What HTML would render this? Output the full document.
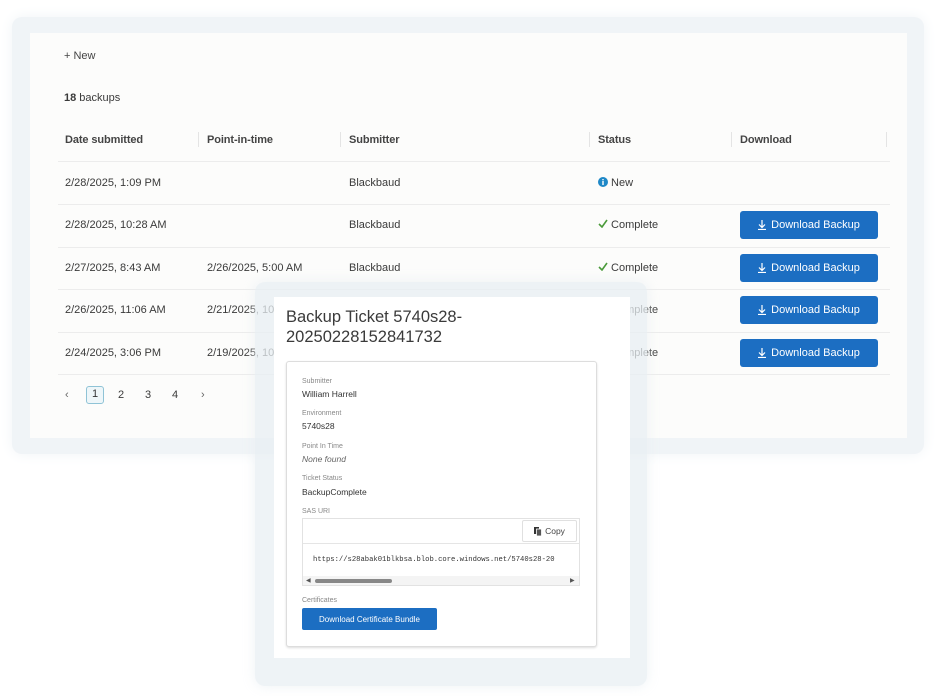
<!DOCTYPE html>
<html><head><meta charset="utf-8"><style>
*{margin:0;padding:0;box-sizing:border-box}
body{width:936px;height:696px;background:#fff;font-family:"Liberation Sans",sans-serif;color:#333;position:relative;overflow:hidden}
.a{position:absolute;white-space:nowrap}
.t{font-size:11px;color:#3a3a3a}
.h{font-size:11px;color:#444;font-weight:bold;letter-spacing:-0.1px}
.line{position:absolute;left:58px;width:832px;height:1px;background:#ececec}
.btn{position:absolute;left:740px;width:138px;height:28px;background:#1c6ec2;border-radius:3px;color:#fff;font-size:11px;display:flex;align-items:center;justify-content:center;gap:5px}
.sep{position:absolute;top:132px;width:1px;height:15px;background:#e4e4e4}
.lbl{position:absolute;left:302px;font-size:7px;color:#888}
.val{position:absolute;left:302px;font-size:8.5px;color:#333}
</style></head><body>
<div class="a" style="left:12px;top:17px;width:912px;height:437px;background:#f0f4f7;border-radius:10px;box-shadow:0 0 14px #f0f4f7"></div>
<div class="a" style="left:30px;top:33px;width:877px;height:405px;background:#fcfcfb"></div>

<div class="a t" style="left:64px;top:50px;color:#444">+ New</div>
<div class="a t" style="left:64px;top:92px"><b>18</b> backups</div>

<div class="a h" style="left:65px;top:134px">Date submitted</div>
<div class="a h" style="left:207px;top:134px">Point-in-time</div>
<div class="a h" style="left:349px;top:134px">Submitter</div>
<div class="a h" style="left:598px;top:134px">Status</div>
<div class="a h" style="left:740px;top:134px">Download</div>
<div class="sep" style="left:198px"></div><div class="sep" style="left:340px"></div><div class="sep" style="left:589px"></div><div class="sep" style="left:731px"></div><div class="sep" style="left:886px"></div>
<div class="line" style="top:161px"></div>
<div class="line" style="top:204px"></div>
<div class="line" style="top:247px"></div>
<div class="line" style="top:289px"></div>
<div class="line" style="top:332px"></div>
<div class="line" style="top:374px"></div>

<div class="a t" style="left:65px;top:177px">2/28/2025, 1:09 PM</div>
<div class="a t" style="left:349px;top:177px">Blackbaud</div>
<div class="a t" style="left:598px;top:177px"><svg width="10" height="10" style="vertical-align:-1px"><circle cx="5" cy="5" r="5" fill="#1e88c7"/><rect x="4.3" y="4" width="1.4" height="4" fill="#fff"/><rect x="4.3" y="2" width="1.4" height="1.3" fill="#fff"/></svg> New</div>

<div class="a t" style="left:65px;top:219px">2/28/2025, 10:28 AM</div>
<div class="a t" style="left:349px;top:219px">Blackbaud</div>
<div class="a t" style="left:598px;top:219px"><svg width="10" height="9" style="vertical-align:0"><path d="M1 5 L4 8 L9 1" stroke="#4a9a3a" stroke-width="1.6" fill="none"/></svg> Complete</div>

<div class="a t" style="left:65px;top:262px">2/27/2025, 8:43 AM</div>
<div class="a t" style="left:207px;top:262px">2/26/2025, 5:00 AM</div>
<div class="a t" style="left:349px;top:262px">Blackbaud</div>
<div class="a t" style="left:598px;top:262px"><svg width="10" height="9" style="vertical-align:0"><path d="M1 5 L4 8 L9 1" stroke="#4a9a3a" stroke-width="1.6" fill="none"/></svg> Complete</div>

<div class="a t" style="left:65px;top:304px">2/26/2025, 11:06 AM</div>
<div class="a t" style="left:207px;top:304px">2/21/2025, 10</div>
<div class="a t" style="left:598px;top:304px"><svg width="10" height="9"></svg> Complete</div>
<div class="a t" style="left:65px;top:347px">2/24/2025, 3:06 PM</div>
<div class="a t" style="left:207px;top:347px">2/19/2025, 10</div>
<div class="a t" style="left:598px;top:347px"><svg width="10" height="9"></svg> Complete</div>

<div class="btn" style="top:211px"><svg width="8" height="10"><path d="M4 0V7M1 4.5L4 7.5L7 4.5M0 9.5H8" stroke="#fff" stroke-width="1.2" fill="none"/></svg>Download Backup</div>
<div class="btn" style="top:254px"><svg width="8" height="10"><path d="M4 0V7M1 4.5L4 7.5L7 4.5M0 9.5H8" stroke="#fff" stroke-width="1.2" fill="none"/></svg>Download Backup</div>
<div class="btn" style="top:296px"><svg width="8" height="10"><path d="M4 0V7M1 4.5L4 7.5L7 4.5M0 9.5H8" stroke="#fff" stroke-width="1.2" fill="none"/></svg>Download Backup</div>
<div class="btn" style="top:339px"><svg width="8" height="10"><path d="M4 0V7M1 4.5L4 7.5L7 4.5M0 9.5H8" stroke="#fff" stroke-width="1.2" fill="none"/></svg>Download Backup</div>

<div class="a t" style="left:65px;top:389px;color:#666">&lsaquo;</div>
<div class="a" style="left:86px;top:386px;width:18px;height:18px;border:1.5px solid #8fc3d6;border-radius:3px;background:#eef6f9;font-size:11px;text-align:center;line-height:15px">1</div>
<div class="a t" style="left:118px;top:389px">2</div>
<div class="a t" style="left:145px;top:389px">3</div>
<div class="a t" style="left:172px;top:389px">4</div>
<div class="a t" style="left:201px;top:389px;color:#666">&rsaquo;</div>

<!-- modal -->
<div class="a" style="left:255px;top:282px;width:392px;height:404px;background:rgba(232,239,243,0.75);border-radius:10px;box-shadow:0 0 12px rgba(232,239,243,0.8)"></div>
<div class="a" style="left:274px;top:297px;width:356px;height:361px;background:#fff"></div>
<div class="a" style="left:286px;top:307px;font-size:16.5px;line-height:20px;color:#3a3a3a">Backup Ticket 5740s28-<br>20250228152841732</div>
<div class="a" style="left:286px;top:361px;width:311px;height:286px;border:1px solid #ddd;border-radius:3px;box-shadow:0 1px 2px #ddd;background:#fff"></div>
<div class="lbl" style="top:378px">Submitter</div><div class="val" style="top:389px">William Harrell</div>
<div class="lbl" style="top:410px">Environment</div><div class="val" style="top:421px">5740s28</div>
<div class="lbl" style="top:443px">Point In Time</div><div class="val" style="top:454px;color:#666;font-style:italic">None found</div>
<div class="lbl" style="top:475px">Ticket Status</div><div class="val" style="top:487px">BackupComplete</div>
<div class="lbl" style="top:508px">SAS URI</div>
<div class="a" style="left:302px;top:518px;width:278px;height:68px;border:1px solid #e2e2e2;background:#fff"></div>
<div class="a" style="left:303px;top:543px;width:276px;height:1px;background:#e5e5e5"></div>
<div class="a" style="left:522px;top:520px;width:55px;height:22px;border:1px solid #e0e0e0;border-radius:2px;font-size:8.5px;color:#444;display:flex;align-items:center;justify-content:center;gap:3px"><svg width="8" height="9"><rect x="0" y="0" width="5" height="7" fill="#333"/><rect x="2.5" y="2" width="5" height="7" fill="#555" stroke="#fff" stroke-width="0.8"/></svg>Copy</div>
<div class="a" style="left:313px;top:556px;font-family:'Liberation Mono',monospace;font-size:7.2px;color:#333">https://s28abak01blkbsa.blob.core.windows.net/5740s28-20</div>
<div class="a" style="left:303px;top:576px;width:276px;height:9px;background:#f4f4f4"></div>
<div class="a" style="left:315px;top:579px;width:77px;height:4px;background:#888;border-radius:2px"></div>
<div class="a" style="left:306px;top:577px;font-size:6px;color:#555">&#9664;</div>
<div class="a" style="left:570px;top:577px;font-size:6px;color:#555">&#9654;</div>
<div class="lbl" style="top:597px">Certificates</div>
<div class="a" style="left:302px;top:608px;width:135px;height:22px;background:#1c6ec2;border-radius:2px;color:#fff;font-size:8px;display:flex;align-items:center;justify-content:center">Download Certificate Bundle</div>
</body></html>
